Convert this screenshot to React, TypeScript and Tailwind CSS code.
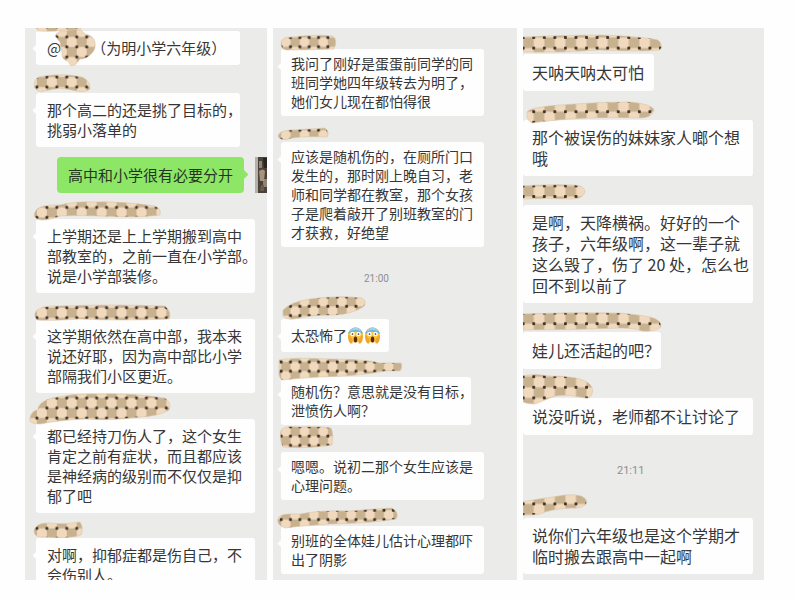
import type { ReactNode } from "react";

type BubbleProps = {
  lines: ReactNode[];
  className: string;
  tail?: boolean;
};

function Bubble({ lines, className, tail = true }: BubbleProps) {
  return (
    <div className={`relative shrink-0 rounded-[3px] bg-[#fefefe] ${className}`}>
      {tail && (
        <span className="absolute top-[14px] -left-[2px] size-[7px] rotate-45 rounded-[1px] bg-[#fefefe]" />
      )}
      {lines.map((line, i) => (
        <p key={i} className="relative whitespace-nowrap">
          {line}
        </p>
      ))}
    </div>
  );
}

type ScribblesProps = {
  id: string;
  viewBox: string;
  x: number;
  y: number;
  w: number;
  h: number;
  paths: string[];
  className: string;
};

/* Checked tape painted over the sender names. */
function Scribbles({ id, viewBox, x, y, w, h, paths, className }: ScribblesProps) {
  const dots = [
    [w / 2, h / 2],
    [(3 * w) / 2, h / 2],
    [w / 2, (3 * h) / 2],
    [(3 * w) / 2, (3 * h) / 2],
  ];
  return (
    <svg className={`pointer-events-none absolute top-0 left-0 ${className}`} viewBox={viewBox} aria-hidden="true">
      <defs>
        <pattern id={id} patternUnits="userSpaceOnUse" x={x - w / 2} y={y - h / 2} width={2 * w} height={2 * h}>
          <rect width={2 * w} height={2 * h} fill="#f1d9bd" />
          <rect x={w / 2} y={h / 2} width={w} height={h} fill="#c8b18f" />
          <rect x={(3 * w) / 2} y={(3 * h) / 2} width={w / 2} height={h / 2} fill="#c8b18f" />
          <rect x={0} y={(3 * h) / 2} width={w / 2} height={h / 2} fill="#c8b18f" />
          <rect x={(3 * w) / 2} y={0} width={w / 2} height={h / 2} fill="#c8b18f" />
          <rect x={0} y={0} width={w / 2} height={h / 2} fill="#c8b18f" />
          {dots.map(([cx, cy]) => (
            <rect key={`${cx} ${cy}`} x={cx - 1.4} y={cy - 1.4} width="2.8" height="2.8" rx="0.6" fill="#3a2e26" />
          ))}
        </pattern>
      </defs>
      {paths.map((d) => (
        <path key={d} d={d} fill={`url(#${id})`} stroke="#d9c7aa" strokeWidth="0.6" />
      ))}
    </svg>
  );
}

function Scream() {
  return (
    <svg className="inline-block size-[17px] align-[-3px]" viewBox="0 0 34 34" role="img" aria-label="惊恐">
      <circle cx="17" cy="16" r="15" fill="#f8c43a" />
      <path d="M2.5 14a14.6 14.6 0 0 1 29 0q-5-5-14.500-5T2.500 14z" fill="#6bb0dc" />
      <path d="M5 10q3-8 12-8.500T29 10q-5-4-12-4T5 10z" fill="#9dd3ec" />
      <circle cx="11" cy="14" r="4.500" fill="#fff" />
      <circle cx="23" cy="14" r="4.500" fill="#fff" />
      <circle cx="11" cy="14" r="1.700" fill="#4a2b12" />
      <circle cx="23" cy="14" r="1.700" fill="#4a2b12" />
      <path d="M2 17q3-2 4 2l5 6v8H7q-5-4-5-16zM32 17q-3-2-4 2l-5 6v8h4q5-4 5-16z" fill="#f0a52c" />
      <ellipse cx="17" cy="25" rx="3.500" ry="6" fill="#5b2a12" />
    </svg>
  );
}

function Avatar() {
  return (
    <svg className="h-[36px] w-[12px] shrink-0" viewBox="0 0 12 36" aria-hidden="true">
      <rect width="12" height="36" fill="#4a423b" />
      <rect width="3" height="36" fill="#b3afa9" />
      <path d="M4 4h3v7H4zM8 22h4v8H8z" fill="#8f8576" />
      <path d="M4 14q4-3 6 0l-1 10H5z" fill="#a8927a" />
      <path d="M6 28h3v6H5z" fill="#6b5c4b" />
      <path d="M8 1h4v10H9z" fill="#2a2521" />
    </svg>
  );
}

const leftTape = [
  "M36 27H83Q78 32 68 30Q52 32 38 31Z",
  "M55 36Q58 30 66 31Q74 28 81 30L85 34Q94 36 95 42Q96 50 91 54Q87 59 80 59L75 65L71 66L68 61Q61 60 62 52Q60 46 60 42Z",
  "M34 86Q34 76 44 76Q64 73 82 77Q91 81 90 89Q85 93 76 91Q60 86 45 91Q36 93 34 86Z",
  "M35 212Q38 204 60 205Q75 201 95 202Q120 201 155 206Q162 209 160 215Q140 218 100 216Q75 215 60 216Q45 222 37 219Q33 217 35 212Z",
  "M35 313Q38 305 60 306Q110 304 165 306Q172 312 169 319Q120 321 80 319Q50 321 37 320Q34 317 35 313Z",
  "M30 418Q32 410 38 410Q38 402 52 398Q75 393 100 394Q130 393 165 398Q172 403 169 410Q160 416 140 417Q110 421 85 419Q60 420 40 424Q28 424 30 418Z",
  "M34 531Q35 523 48 523Q65 525 80 522Q84 528 81 535Q70 539 45 537Q34 538 34 531Z",
];

const middleTape = [
  "M281 44Q280 37 292 37Q315 34 333 36Q338 40 334 49Q310 50 286 50Q281 49 281 44Z",
  "M278 136Q279 131 290 130Q310 129 325 128Q330 132 327 137Q305 136 292 138Q280 142 278 136Z",
  "M283 310Q290 302 310 299Q340 295 362 298Q368 302 363 307Q352 314 335 315Q310 315 300 318Q286 321 283 316Z",
  "M279 360Q290 357 330 359Q365 359 380 363L401 363Q403 367 400 371L385 371Q360 376 320 377Q300 378 282 380Q278 377 279 370Z",
  "M281 430Q285 425 300 427Q320 426 331 428Q334 434 332 445Q310 449 283 447Q279 440 281 430Z",
  "M278 518Q280 513 300 514Q320 510 350 511Q370 509 392 508Q400 513 396 519Q375 523 330 524Q300 526 285 528Q276 525 278 518Z",
];

const rightTape = [
  "M520 37Q570 35 600 35Q640 36 658 40Q664 45 660 50Q640 52 600 50Q560 53 520 52Z",
  "M527 112Q530 107 560 105Q600 102 630 102Q652 104 654 110Q652 118 640 118Q600 117 570 119Q545 121 532 123Q526 120 527 112Z",
  "M520 186Q550 184 575 185Q585 186 585 192Q583 199 572 199Q545 198 520 199Z",
  "M520 314Q570 312 620 313Q640 315 650 317Q662 320 661 327Q655 332 642 331Q635 328 620 328Q570 330 520 330Z",
  "M520 376Q535 373 550 376Q575 376 585 381Q595 386 592 394Q590 399 585 398Q570 394 555 396Q545 400 535 404Q524 404 520 400Z",
  "M520 502Q545 498 565 495Q585 493 587 502Q584 509 572 508Q550 509 540 514Q530 516 520 515Z",
];

export default function App() {
  return (
    <main className="grid min-h-screen grid-cols-[242fr_244fr_241fr] gap-[6px] bg-[#fefefe] pt-[28px] pr-[31px] pb-[21px] pl-[25px] font-['Noto_Sans_CJK_SC',sans-serif] text-[#363636]">
      <section className="relative flex h-[calc(100vh-49px)] flex-col items-start overflow-hidden bg-[#ebebea] pl-[11px] text-[15px] leading-[20px]">
        <Bubble
          className="mt-[3px] w-[204px] px-[11px] py-[7px]"
          lines={[
            <>
              @<span className="ml-[30px]">（为明小学六年级）</span>
            </>,
          ]}
        />
        <Bubble
          className="mt-[28px] w-[204px] px-[11px] py-[7px]"
          lines={["那个高二的还是挑了目标的，", "挑弱小落单的"]}
        />
        <div className="mt-[10px] flex shrink-0 items-center gap-[11px] self-end">
          <div className="relative rounded-[4px] bg-[#8ee666] px-[11px] py-[8px] text-[#25361f]">
            <span className="absolute top-[14px] -right-[3px] size-[7px] rotate-45 rounded-[1px] bg-[#8ee666]" />
            <p className="relative whitespace-nowrap">高中和小学很有必要分开</p>
          </div>
          <Avatar />
        </div>
        <Bubble
          className="mt-[26px] w-[219px] px-[11px] py-[7px]"
          lines={["上学期还是上上学期搬到高中", "部教室的，之前一直在小学部。", "说是小学部装修。"]}
        />
        <Bubble
          className="mt-[26px] w-[219px] px-[11px] py-[7px]"
          lines={["这学期依然在高中部，我本来", "说还好耶，因为高中部比小学", "部隔我们小区更近。"]}
        />
        <Bubble
          className="mt-[26px] w-[219px] px-[11px] py-[7px]"
          lines={["都已经持刀伤人了，这个女生", "肯定之前有症状，而且都应该", "是神经病的级别而不仅仅是抑", "郁了吧"]}
        />
        <Bubble
          className="mt-[25px] w-[219px] px-[11px] py-[7px]"
          lines={["对啊，抑郁症都是伤自己，不", "会伤别人。"]}
        />
        <Scribbles
          id="tape-left"
          className="h-[552px] w-[242px]"
          viewBox="25 28 242 552"
          x={36.9}
          y={36.9}
          w={9.96}
          h={10.03}
          paths={leftTape}
        />
      </section>

      <section className="relative flex h-[calc(100vh-49px)] flex-col items-start overflow-hidden bg-[#ebebea] pl-[8px] text-[14px] leading-[19px]">
        <Bubble
          className="mt-[21px] w-[203px] px-[10px] py-[5px]"
          lines={["我问了刚好是蛋蛋前同学的同", "班同学她四年级转去为明了，", "她们女儿现在都怕得很"]}
        />
        <Bubble
          className="mt-[26px] w-[203px] px-[10px] py-[5px]"
          lines={[
            "应该是随机伤的，在厕所门口",
            "发生的，那时刚上晚自习，老",
            "师和同学都在教室，那个女孩",
            "子是爬着敲开了别班教室的门",
            "才获救，好绝望",
          ]}
        />
        <time className="mt-[22px] ml-[83px] shrink-0 font-['Roboto',sans-serif] text-[10px] text-[#8f8f8f]">21:00</time>
        <Bubble
          className="mt-[31px] w-[108px] px-[10px] py-[7px]"
          lines={[
            <>
              太恐怖了
              <Scream />
              <Scream />
            </>,
          ]}
        />
        <Bubble
          className="mt-[25px] w-[190px] px-[10px] py-[5px]"
          lines={["随机伤？意思就是没有目标，", "泄愤伤人啊？"]}
        />
        <Bubble
          className="mt-[27px] w-[203px] px-[10px] py-[5px]"
          lines={["嗯嗯。说初二那个女生应该是", "心理问题。"]}
        />
        <Bubble
          className="mt-[26px] w-[203px] px-[10px] py-[5px]"
          lines={["别班的全体娃儿估计心理都吓", "出了阴影"]}
        />
        <Scribbles
          id="tape-middle"
          className="h-[552px] w-[244px]"
          viewBox="273 28 244 552"
          x={290.5}
          y={37.5}
          w={9.35}
          h={9.27}
          paths={middleTape}
        />
      </section>

      <section className="relative flex h-[calc(100vh-49px)] flex-col items-start overflow-hidden bg-[#ebebea] text-[16px] leading-[21px]">
        <Bubble tail={false} className="mt-[26px] w-[131px] px-[9px] py-[8px]" lines={["天呐天呐太可怕"]} />
        <Bubble
          tail={false}
          className="mt-[29px] w-[230px] px-[9px] py-[7px]"
          lines={["那个被误伤的妹妹家人啷个想", "哦"]}
        />
        <Bubble
          tail={false}
          className="mt-[29px] w-[230px] px-[9px] py-[7px]"
          lines={["是啊，天降横祸。好好的一个", "孩子，六年级啊，这一辈子就", "这么毁了，伤了 20 处，怎么也", "回不到以前了"]}
        />
        <Bubble tail={false} className="mt-[29px] w-[138px] px-[9px] py-[8px]" lines={["娃儿还活起的吧？"]} />
        <Bubble tail={false} className="mt-[29px] w-[230px] px-[9px] py-[8px]" lines={["说没听说，老师都不让讨论了"]} />
        <time className="mt-[25px] ml-[94px] shrink-0 font-['Roboto',sans-serif] text-[11px] text-[#8f8f8f]">21:11</time>
        <Bubble
          tail={false}
          className="mt-[37px] w-[230px] px-[9px] py-[7px]"
          lines={["说你们六年级也是这个学期才", "临时搬去跟高中一起啊"]}
        />
        <Scribbles
          id="tape-right"
          className="h-[552px] w-[241px]"
          viewBox="523 28 241 552"
          x={544.3}
          y={37.5}
          w={10.56}
          h={10.6}
          paths={rightTape}
        />
      </section>
    </main>
  );
}
